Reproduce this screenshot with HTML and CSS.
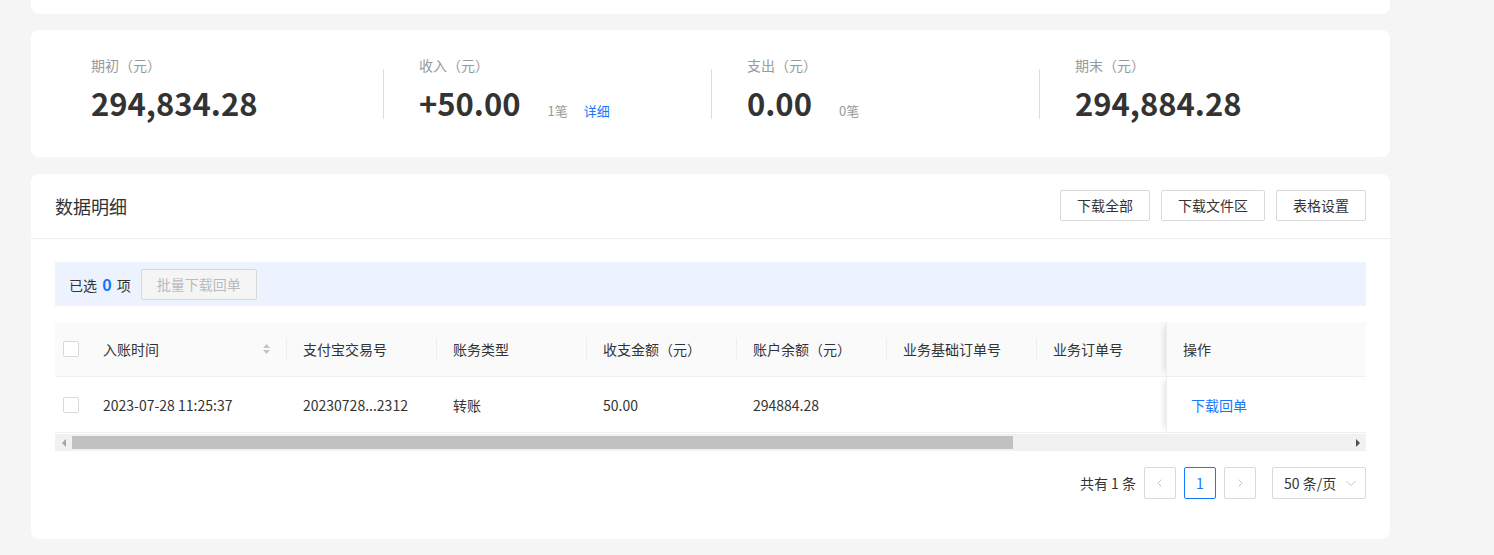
FILE: index.html
```html
<!DOCTYPE html>
<html lang="zh-CN">
<head>
    <meta charset="UTF-8">
    <meta name="viewport" content="width=device-width, initial-scale=1.0">
    <title>账户明细</title>
    <link rel="stylesheet" href="styles.css">
</head>
<body>
    <div class="page">
        <!-- 上方卡片（只露出底部） -->
        <div class="card card-top"></div>

        <!-- 汇总 -->
        <div class="card summary">
            <div class="stat stat-first">
                <div class="stat-label">期初（元）</div>
                <div class="stat-value"><span class="num">294,834.28</span></div>
            </div>
            <div class="divider"></div>
            <div class="stat">
                <div class="stat-label">收入（元）</div>
                <div class="stat-value"><span class="num">+50.00</span><span class="count">1笔</span><a class="link detail">详细</a></div>
            </div>
            <div class="divider"></div>
            <div class="stat">
                <div class="stat-label">支出（元）</div>
                <div class="stat-value"><span class="num">0.00</span><span class="count">0笔</span></div>
            </div>
            <div class="divider"></div>
            <div class="stat">
                <div class="stat-label">期末（元）</div>
                <div class="stat-value"><span class="num">294,884.28</span></div>
            </div>
        </div>

        <!-- 数据明细 -->
        <div class="card detail-card">
            <div class="card-head">
                <div class="card-title">数据明细</div>
                <div class="head-actions">
                    <button class="btn">下载全部</button>
                    <button class="btn">下载文件区</button>
                    <button class="btn">表格设置</button>
                </div>
            </div>
            <div class="card-body">
                <div class="select-bar">
                    <span>已选 <b class="sel-num">0</b> 项</span>
                    <button class="btn btn-disabled">批量下载回单</button>
                </div>

                <div class="table">
                    <div class="table-scroll">
                        <div class="tr thead">
                            <div class="td col-check"><span class="checkbox"></span></div>
                            <div class="td col-time sep">入账时间
                                <span class="sorter">
                                    <svg width="9" height="12" viewBox="0 0 9 12"><path d="M4.5 1 L8 5 L1 5 Z" fill="#c4c4c4"/><path d="M4.5 11 L8 7 L1 7 Z" fill="#c4c4c4"/></svg>
                                </span>
                            </div>
                            <div class="td col sep">支付宝交易号</div>
                            <div class="td col sep">账务类型</div>
                            <div class="td col sep">收支金额（元）</div>
                            <div class="td col sep">账户余额（元）</div>
                            <div class="td col sep">业务基础订单号</div>
                            <div class="td col col-last">业务订单号</div>
                            <div class="td col-fixed">操作</div>
                        </div>
                        <div class="tr tbody">
                            <div class="td col-check"><span class="checkbox"></span></div>
                            <div class="td col-time">2023-07-28 11:25:37</div>
                            <div class="td col">20230728...2312</div>
                            <div class="td col">转账</div>
                            <div class="td col">50.00</div>
                            <div class="td col">294884.28</div>
                            <div class="td col"></div>
                            <div class="td col col-last"></div>
                            <div class="td col-fixed"><a class="link row-link">下载回单</a></div>
                        </div>
                    </div>
                    <!-- 横向滚动条 -->
                    <div class="scrollbar">
                        <span class="arrow arrow-left"></span>
                        <div class="track"><div class="thumb"></div></div>
                        <span class="arrow arrow-right"></span>
                    </div>
                </div>

                <div class="pager">
                    <span class="total">共有 1 条</span>
                    <span class="page-btn">
                        <svg width="10" height="10" viewBox="0 0 10 10"><path d="M6.5 1.5 L3 5 L6.5 8.5" fill="none" stroke="#c4c4c4" stroke-width="1"/></svg>
                    </span>
                    <span class="page-btn active">1</span>
                    <span class="page-btn">
                        <svg width="10" height="10" viewBox="0 0 10 10"><path d="M3.5 1.5 L7 5 L3.5 8.5" fill="none" stroke="#c4c4c4" stroke-width="1"/></svg>
                    </span>
                    <span class="size-select">50 条/页
                        <svg width="12" height="12" viewBox="0 0 12 12"><path d="M1.5 4 L6 8.5 L10.5 4" fill="none" stroke="#c4c4c4" stroke-width="1"/></svg>
                    </span>
                </div>
            </div>
        </div>
    </div>
</body>
</html>
```

FILE: styles.css
```css
/* 基础 */
body {
    margin: 0;
    background-color: #f5f5f5;
    font-family: "Noto Sans CJK SC", "Noto Sans", sans-serif;
    font-size: 14px;
    color: #333333;
}
.page {
    width: 1359px;
    padding-left: 31px;
}
.card {
    background-color: #ffffff;
    border-radius: 8px;
    margin-bottom: 16px;
}
.card-top {
    height: 14px;
    border-radius: 0 0 8px 8px;
}
.link {
    color: #1677ff;
    cursor: pointer;
    text-decoration: none;
}

/* 汇总 */
.summary {
    height: 127px;
    display: flex;
    align-items: flex-start;
    padding: 25px 0 0 60px;
    box-sizing: border-box;
    margin-bottom: 17px;
}
.stat {
    width: 327px;
    flex-shrink: 0;
    padding-left: 35px;
    box-sizing: border-box;
}
.stat-first {
    width: 292px;
    padding-left: 0;
}
.divider {
    width: 1px;
    height: 50px;
    flex-shrink: 0;
    background-color: #dddddd;
    margin-top: 14px;
}
.stat-label {
    font-size: 14px;
    color: #999999;
    line-height: 20px;
}
.stat-value {
    display: flex;
    align-items: baseline;
    margin-top: 6px;
    height: 44px;
    line-height: 44px;
}
.num {
    font-size: 31px;
    font-weight: bold;
    color: #333333;
}
.count {
    font-size: 13px;
    color: #999999;
    margin-left: 27px;
}
.detail {
    font-size: 13px;
    margin-left: 16px;
}

/* 数据明细 */
.card-head {
    height: 64px;
    display: flex;
    justify-content: space-between;
    align-items: center;
    padding: 0 24px;
    border-bottom: 1px solid #eeeeee;
}
.card-title {
    font-size: 18px;
    color: #333333;
}
.head-actions {
    display: flex;
    gap: 11px;
    margin-top: -2px;
}
.btn {
    height: 31px;
    padding: 0 16px;
    border: 1px solid #d9d9d9;
    border-radius: 2px;
    background-color: #ffffff;
    font-family: inherit;
    font-size: 14px;
    color: #333333;
    cursor: pointer;
}
.btn-disabled {
    padding: 0 15px;
    background-color: #f5f5f5;
    color: #bbbbbb;
    cursor: not-allowed;
}
.card-body {
    padding: 23px 24px 40px;
}
.select-bar {
    height: 44px;
    background-color: #ecf3fe;
    display: flex;
    align-items: center;
    gap: 10px;
    padding: 0 14px;
}
.sel-num {
    color: #1677ff;
    font-size: 16px;
    margin: 0 2px;
}

/* 表格 */
.table {
    margin-top: 16px;
}
.table-scroll {
    overflow: hidden;
}
.tr {
    display: flex;
    border-bottom: 1px solid #f0f0f0;
}
.thead {
    height: 54px;
    background-color: #fafafa;
}
.tbody {
    height: 55px;
}
.td {
    display: flex;
    align-items: center;
    flex-shrink: 0;
    box-sizing: border-box;
    padding: 0 16px;
    white-space: nowrap;
}
.col-check {
    width: 32px;
    padding: 0 8px;
}
.col-time {
    width: 200px;
}
.col {
    width: 150px;
}
.col-last {
    flex: 1 1 auto;
    min-width: 0;
    overflow: hidden;
}
.col-fixed {
    width: 200px;
    border-left: 1px solid #eeeeee;
    box-shadow: -5px 0 6px -4px rgba(0, 0, 0, 0.15);
}
.thead .col-fixed {
    background-color: #fafafa;
}
.tbody .col-fixed {
    background-color: #ffffff;
}
.sep {
    background-image: linear-gradient(#eeeeee, #eeeeee);
    background-size: 1px 22px;
    background-repeat: no-repeat;
    background-position: right center;
}
.sorter {
    margin-left: auto;
    margin-right: 0;
    display: flex;
}
.checkbox {
    width: 14px;
    height: 14px;
    border: 1px solid #d9d9d9;
    border-radius: 2px;
    background-color: #ffffff;
}
.row-link {
    margin-left: 8px;
}

/* 滚动条 */
.scrollbar {
    height: 17px;
    margin-top: 1px;
    background-color: #f1f1f1;
    display: flex;
    align-items: center;
}
.arrow {
    width: 17px;
    height: 17px;
    display: flex;
    align-items: center;
    justify-content: center;
}
.arrow::before {
    content: "";
    border-top: 4px solid transparent;
    border-bottom: 4px solid transparent;
}
.arrow-left::before {
    border-right: 4px solid #a3a3a3;
}
.arrow-right::before {
    border-left: 4px solid #505050;
}
.track {
    flex: 1;
    height: 13px;
}
.thumb {
    width: 941px;
    height: 13px;
    background-color: #c1c1c1;
}

/* 分页 */
.pager {
    margin-top: 16px;
    display: flex;
    justify-content: flex-end;
    align-items: center;
    height: 32px;
}
.total {
    margin-right: 8px;
}
.page-btn {
    width: 30px;
    height: 30px;
    border: 1px solid #d9d9d9;
    border-radius: 2px;
    display: flex;
    align-items: center;
    justify-content: center;
    margin-right: 8px;
}
.page-btn.active {
    border-color: #1677ff;
    color: #1677ff;
}
.size-select {
    width: 92px;
    height: 30px;
    border: 1px solid #d9d9d9;
    border-radius: 2px;
    margin-left: 8px;
    display: flex;
    align-items: center;
    justify-content: space-between;
    text-indent: 11px;
}
.size-select svg {
    margin-right: 8px;
}
```
